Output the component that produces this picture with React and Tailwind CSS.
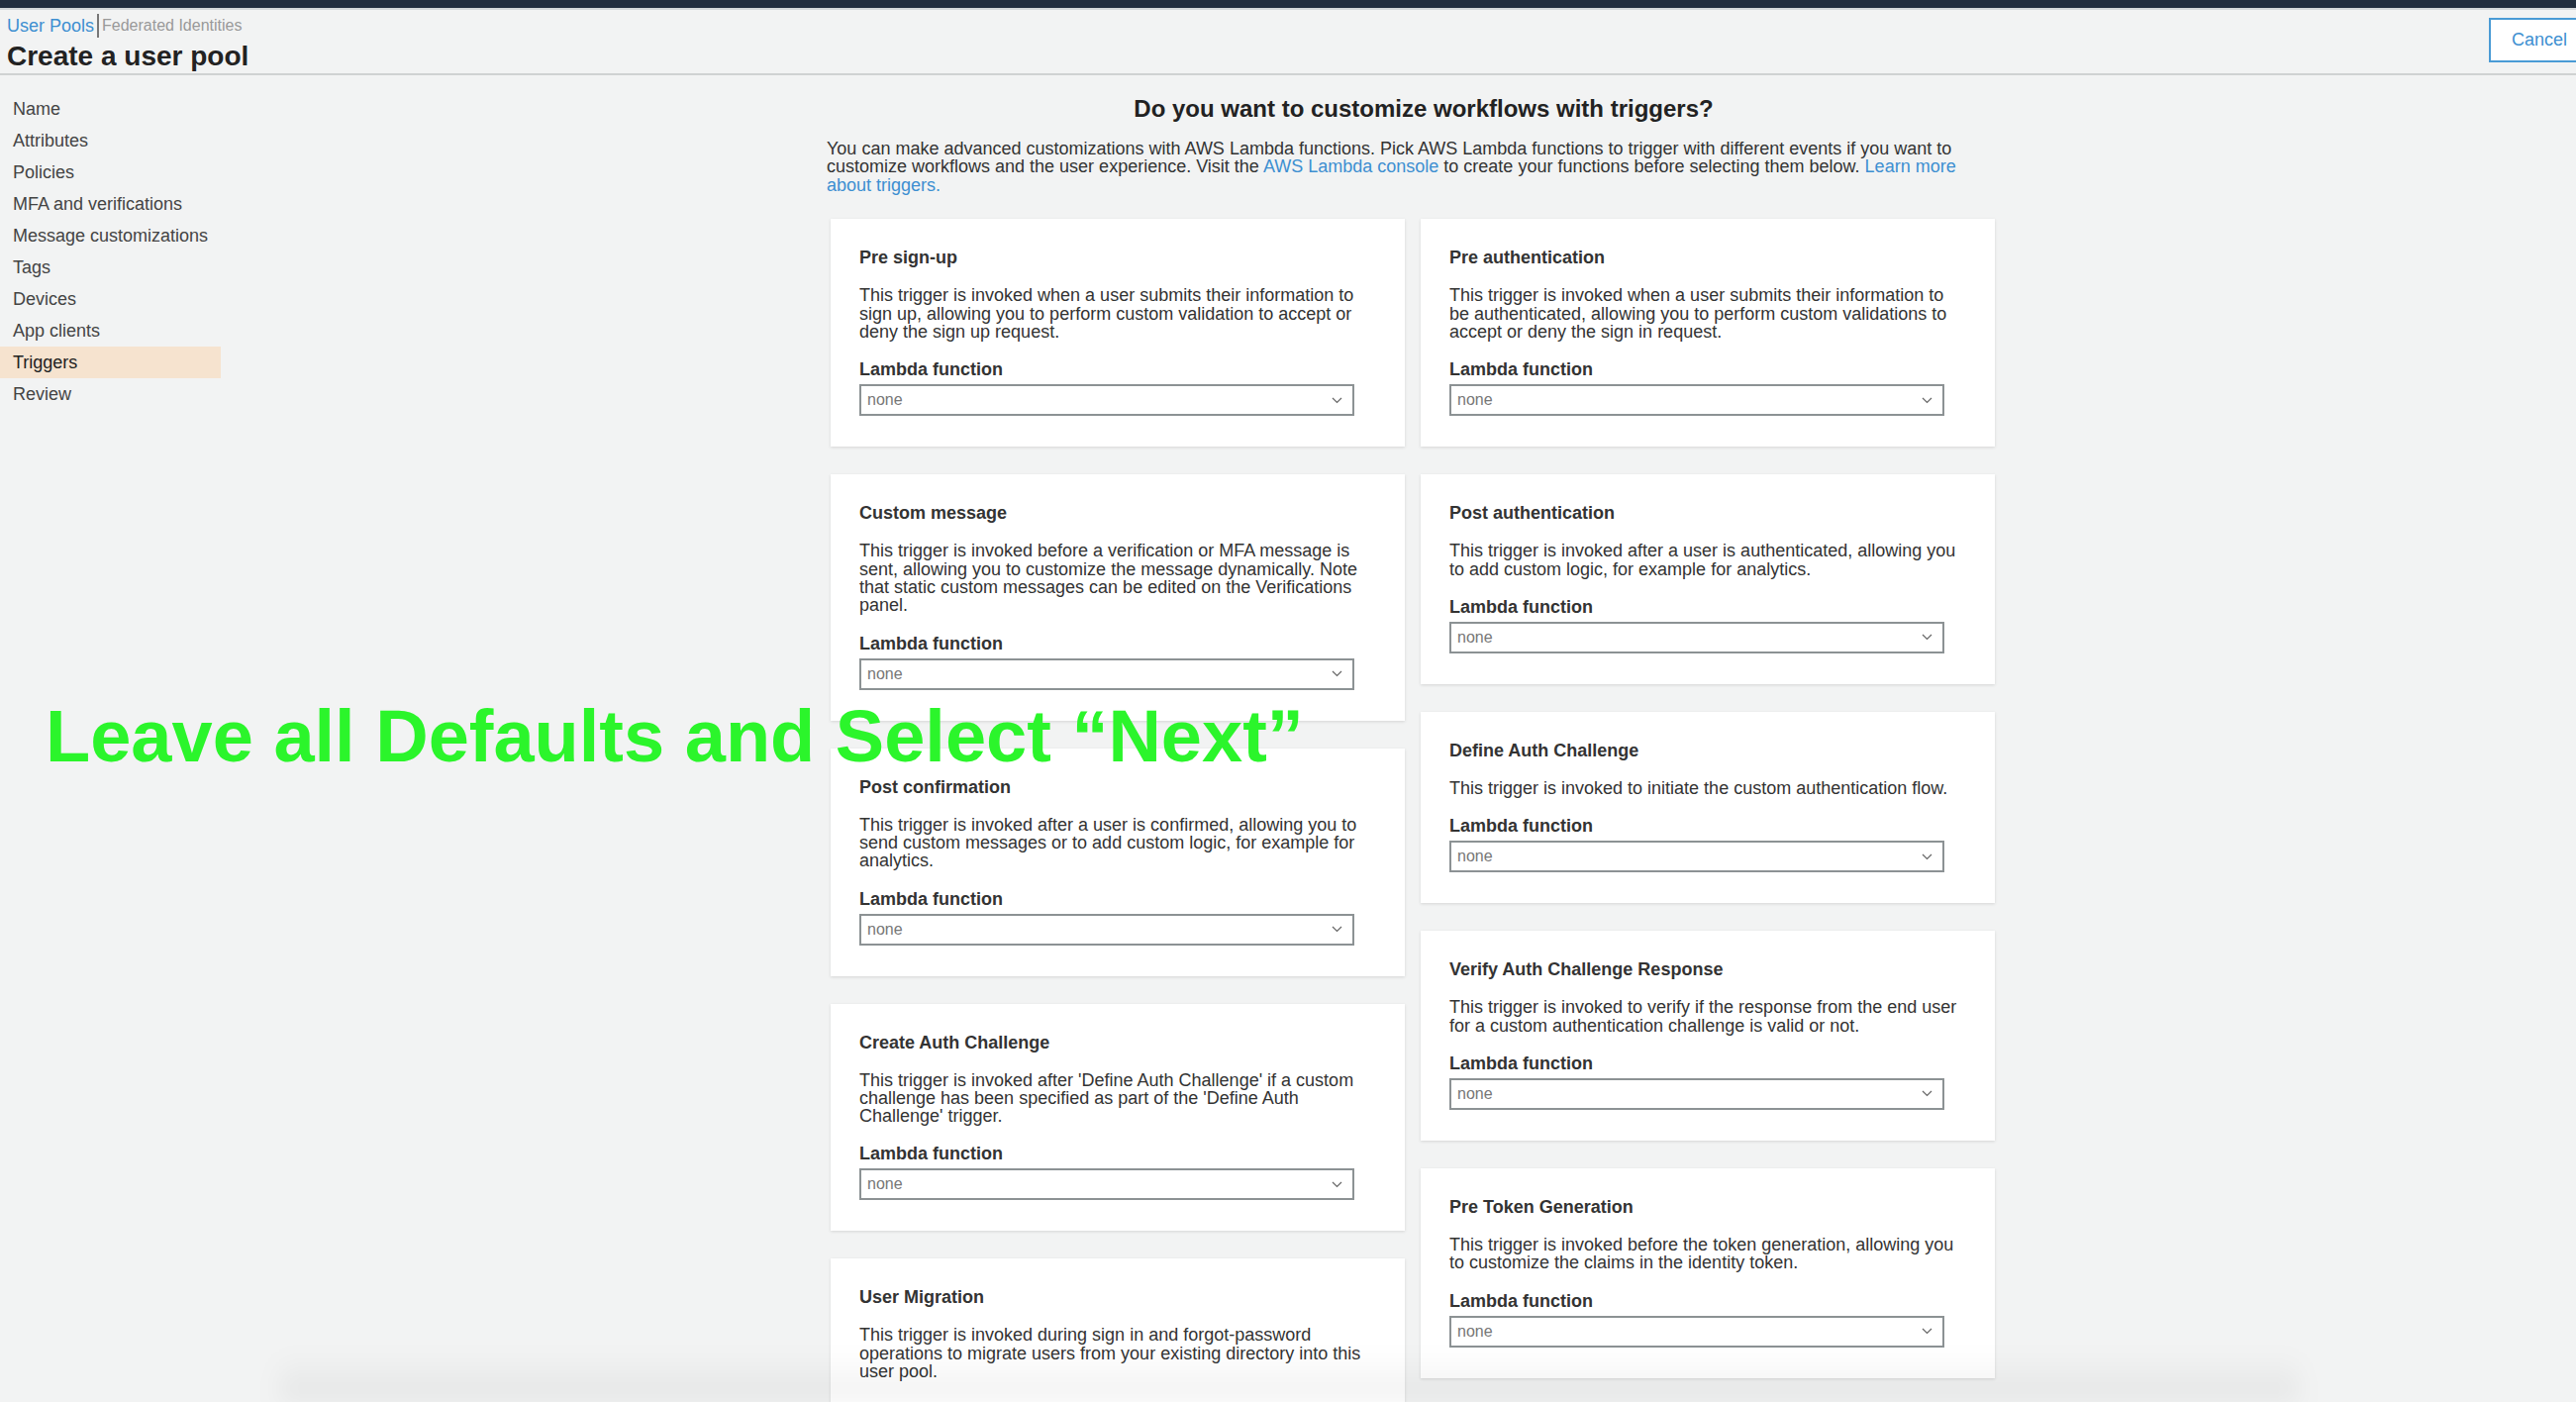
import React from 'react';

const navItems = ['Name', 'Attributes', 'Policies', 'MFA and verifications', 'Message customizations', 'Tags', 'Devices', 'App clients', 'Triggers', 'Review'];

const leftTriggers = [
  { title: 'Pre sign-up', text: 'This trigger is invoked when a user submits their information to sign up, allowing you to perform custom validation to accept or deny the sign up request.' },
  { title: 'Custom message', text: 'This trigger is invoked before a verification or MFA message is sent, allowing you to customize the message dynamically. Note that static custom messages can be edited on the Verifications panel.' },
  { title: 'Post confirmation', text: 'This trigger is invoked after a user is confirmed, allowing you to send custom messages or to add custom logic, for example for analytics.' },
  { title: 'Create Auth Challenge', text: "This trigger is invoked after 'Define Auth Challenge' if a custom challenge has been specified as part of the 'Define Auth Challenge' trigger." },
  { title: 'User Migration', text: 'This trigger is invoked during sign in and forgot-password operations to migrate users from your existing directory into this user pool.' },
];

const rightTriggers = [
  { title: 'Pre authentication', text: 'This trigger is invoked when a user submits their information to be authenticated, allowing you to perform custom validations to accept or deny the sign in request.' },
  { title: 'Post authentication', text: 'This trigger is invoked after a user is authenticated, allowing you to add custom logic, for example for analytics.' },
  { title: 'Define Auth Challenge', text: 'This trigger is invoked to initiate the custom authentication flow.' },
  { title: 'Verify Auth Challenge Response', text: 'This trigger is invoked to verify if the response from the end user for a custom authentication challenge is valid or not.' },
  { title: 'Pre Token Generation', text: 'This trigger is invoked before the token generation, allowing you to customize the claims in the identity token.' },
];

const Chevron = () => (
  <svg width="11" height="7" viewBox="0 0 11 7" fill="none" className="shrink-0">
    <path d="M1 1l4.5 4.5L10 1" stroke="#666" strokeWidth="1.2" />
  </svg>
);

const TriggerCard = ({ title, text }) => (
  <div className="bg-white shadow-[0_1px_3px_rgba(0,0,0,0.12)] pt-[29px] px-[29px] pb-[31px]">
    <div className="text-[18px] leading-[20px] font-bold text-[#333]">{title}</div>
    <p className="mt-[19px] text-[18px] leading-[18.33px] text-[#333]">{text}</p>
    <div className="mt-[19px] text-[18px] leading-[20px] font-bold text-[#333]">Lambda function</div>
    <div className="mt-[5px] w-[500px] h-[32px] border-2 border-[#8c9294] bg-white flex items-center justify-between pl-[6px] pr-[10px]">
      <span className="text-[16px] text-[#777]">none</span>
      <Chevron />
    </div>
  </div>
);

export default function App() {
  return (
    <div className="relative h-[1416px] w-full overflow-hidden bg-[#f2f3f3] font-['Liberation_Sans',Arial,sans-serif] text-[#333]">
      <div className="h-[8px] bg-[#232f3e]" />
      <div className="h-[2px] bg-[#d5d8d8]" />

      {/* header */}
      <div className="flex justify-between border-b-2 border-[#cfd2d2] h-[66px]">
        <div className="pl-[7px] pt-[5px]">
          <div className="flex items-center h-[22px]">
            <span className="text-[18px] text-[#3d8fd1]">User Pools</span>
            <span className="mx-[3px] w-[2px] h-[24px] bg-[#777]" />
            <span className="text-[16px] text-[#999]">Federated Identities</span>
          </div>
          <h1 className="mt-[4px] text-[28px] leading-[32px] font-bold text-[#222]">Create a user pool</h1>
        </div>
        <div className="pt-[8px] -mr-[14px]">
          <button className="h-[45px] px-[21px] border-2 border-[#4a9bd5] bg-white text-[18px] text-[#3d8fd1]">Cancel</button>
        </div>
      </div>

      <div className="flex">
        {/* sidebar */}
        <div className="w-[223px] shrink-0 pt-[18px]">
          {navItems.map((item) => (
            <div
              key={item}
              className={`h-[32px] flex items-center pl-[13px] text-[18px] ${item === 'Triggers' ? 'bg-[#f6e3cf] text-[#222]' : 'text-[#444]'}`}
            >
              {item}
            </div>
          ))}
        </div>

        {/* main */}
        <div className="ml-[612px] w-[1186px] shrink-0 pt-[20px]">
          <h2 className="text-center pl-[20px] text-[24px] leading-[28px] font-bold text-[#222]">Do you want to customize workflows with triggers?</h2>
          <p className="mt-[17px] text-[18px] leading-[18.4px] text-[#333]">
            You can make advanced customizations with AWS Lambda functions. Pick AWS Lambda functions to trigger with different events if you want to customize workflows and the user experience. Visit the{' '}
            <a className="text-[#3d8fd1]">AWS Lambda console</a> to create your functions before selecting them below.{' '}
            <a className="text-[#3d8fd1]">Learn more about triggers.</a>
          </p>

          <div className="mt-[25px] pl-[4px] flex gap-[16px] items-start">
            <div className="w-[580px] flex flex-col gap-[28px]">
              {leftTriggers.map((t) => (
                <TriggerCard key={t.title} {...t} />
              ))}
            </div>
            <div className="w-[580px] flex flex-col gap-[28px]">
              {rightTriggers.map((t) => (
                <TriggerCard key={t.title} {...t} />
              ))}
            </div>
          </div>
        </div>
      </div>

      {/* annotation overlay */}
      <div className="absolute left-[46px] top-[707px] text-[74px] leading-none font-bold text-[#2bf52b] whitespace-nowrap">
        Leave all Defaults and Select “Next”
      </div>

      {/* bottom window shadow */}
      <div className="absolute bottom-0 left-[282px] w-[2040px] h-[50px] bg-linear-to-t from-black/[0.06] to-transparent blur-md" />
    </div>
  );
}
